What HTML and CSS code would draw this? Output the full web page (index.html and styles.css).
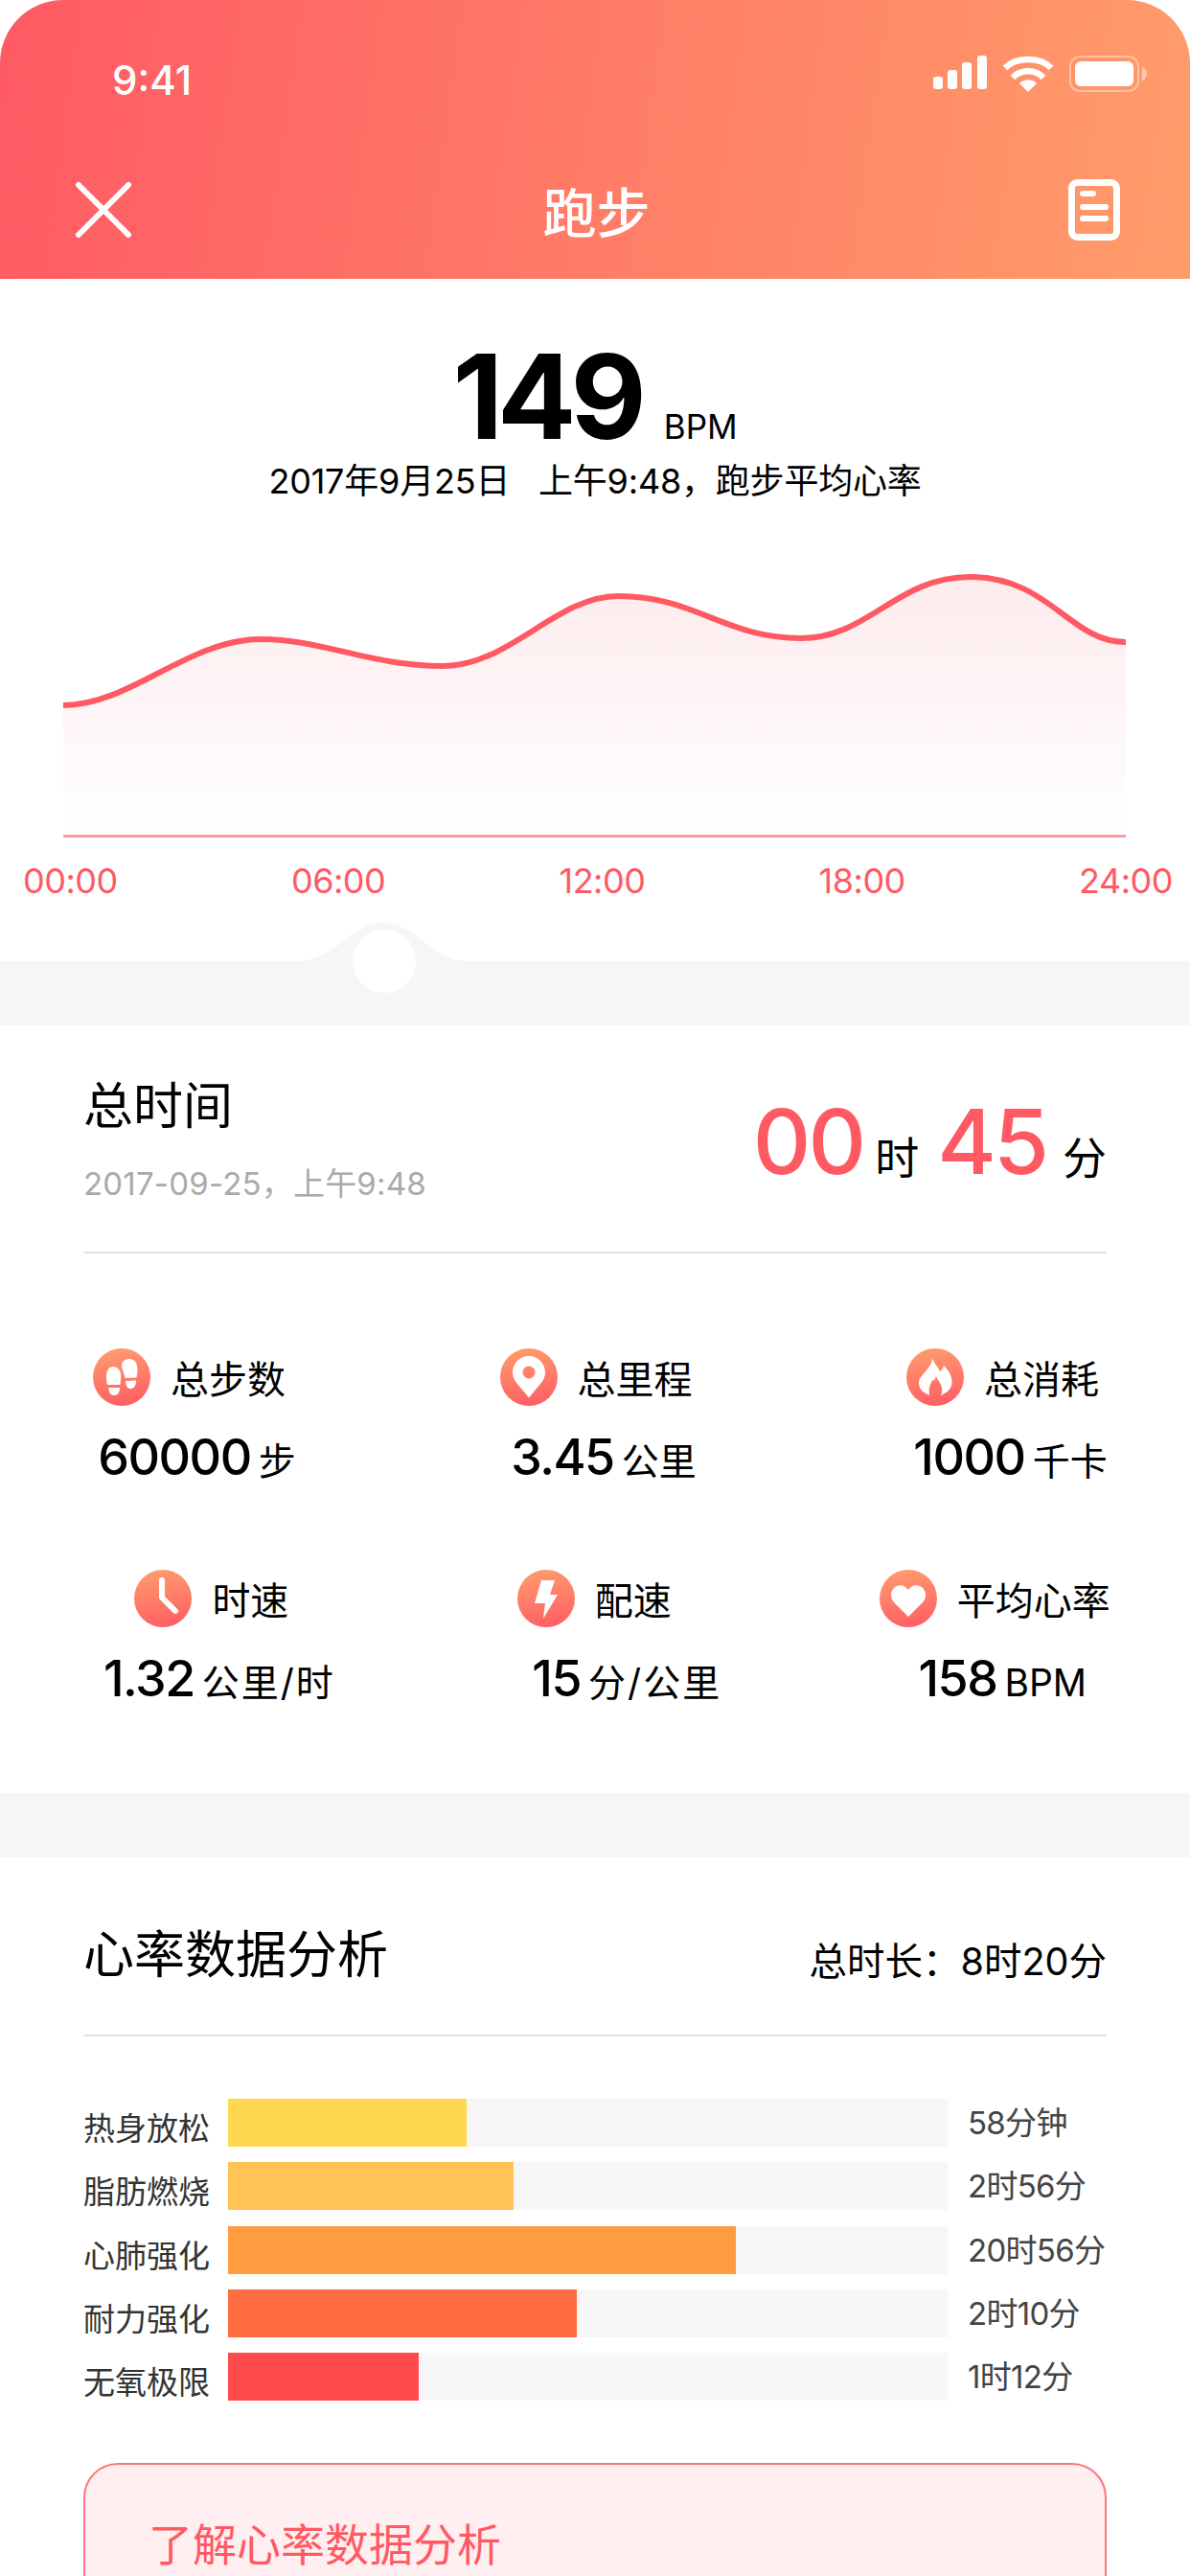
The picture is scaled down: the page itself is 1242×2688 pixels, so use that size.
FILE: index.html
```html
<!DOCTYPE html>
<html lang="zh-CN">
<head>
  <meta charset="UTF-8">
  <title>跑步</title>
  <link rel="stylesheet" href="styles.css">
</head>
<body>
<div class="page">

  <header class="topbar">
    <div class="status">
      <span class="clock">9:41</span>
      <div class="status-icons">
        <svg width="56" height="36" viewBox="0 0 56 36"><rect x="0" y="22" width="10" height="13" rx="3"/><rect x="15" y="15" width="10" height="20" rx="3"/><rect x="30" y="7" width="10" height="28" rx="3"/><rect x="46" y="0" width="10" height="35" rx="3"/></svg>
        <svg width="54" height="40" viewBox="0 0 54 40"><path d="M3 13C14 1 40 1 51 13" fill="none" stroke="#fff" stroke-width="6.5"/><path d="M11 23C19 14 35 14 43 23" fill="none" stroke="#fff" stroke-width="6.5"/><path d="M27 38L18 29C23 24 31 24 36 29Z"/></svg>
        <svg width="82" height="38" viewBox="0 0 82 38"><rect x="1" y="1" width="71" height="36" rx="10" fill="none" stroke="#fff" stroke-opacity=".4" stroke-width="2"/><rect x="6" y="6" width="61" height="26" rx="6"/><path d="M76 12c3 1 5 4 5 7s-2 6-5 7z" fill-opacity=".45"/></svg>
      </div>
    </div>
    <nav class="navbar">
      <svg width="60" height="60" viewBox="0 0 60 60"><path d="M4 4L56 56M56 4L4 56" fill="none" stroke="#fff" stroke-width="6" stroke-linecap="round"/></svg>
      <h1>跑步</h1>
      <svg width="54" height="64" viewBox="0 0 54 64"><rect x="3.500" y="3.500" width="47" height="57" rx="6" fill="none" stroke="#fff" stroke-width="7"/><rect x="12" y="12" width="17" height="6" rx="3"/><rect x="12" y="26" width="30" height="6" rx="3"/><rect x="12" y="38" width="30" height="6" rx="3"/></svg>
    </nav>
  </header>

  <section class="hero">
    <div class="bpm"><b>149</b><span>BPM</span></div>
    <p class="hero-sub">2017年9月25日&nbsp;&nbsp;&nbsp;上午9:48，跑步平均心率</p>
    <svg class="chart" width="1109" height="285" viewBox="0 0 1109 285">
      <defs>
        <linearGradient id="area" x1="0" y1="0" x2="0" y2="1">
          <stop offset="0" stop-color="#fdebed"/>
          <stop offset="1" stop-color="#fff"/>
        </linearGradient>
      </defs>
      <path fill="url(#area)" d="M0 146C70 146 130 77 207 77C270 77 320 105 397 105C465 105 515 32 579 32C660 32 690 76 770 76C840 76 870 12 946 12C1030 12 1050 80 1109 80V282H0Z"/>
      <path fill="none" stroke="#ff5a64" stroke-width="6" d="M0 146C70 146 130 77 207 77C270 77 320 105 397 105C465 105 515 32 579 32C660 32 690 76 770 76C840 76 870 12 946 12C1030 12 1050 80 1109 80"/>
      <rect x="0" y="281" width="1109" height="3" fill="#ff979d"/>
    </svg>
    <div class="axis">
      <span>00:00</span><span>06:00</span><span>12:00</span><span>18:00</span><span>24:00</span>
    </div>
  </section>

  <div class="band band-knob">
    <svg class="knob" width="180" height="74" viewBox="0 0 180 74"><path fill="#f6f6f6" d="M0 40C40 40 55 0 90 0C125 0 140 40 180 40Z"/><circle cx="91" cy="40" r="33" fill="#fff"/></svg>
  </div>

  <section class="summary">
    <div>
      <h2>总时间</h2>
      <p class="summary-date">2017-09-25，上午9:48</p>
    </div>
    <div class="duration"><b>00</b><span>时</span><b>45</b><span>分</span></div>
  </section>

  <section class="stats">
    <div class="stats-row">
      <div class="stat">
        <div class="stat-head">
          <span class="stat-icon"><svg width="60" height="60" viewBox="0 0 60 60"><path d="M15 38C14 32 13.500 29 14.500 25C15.500 21 18 19 21 19C25 19 28 22 29 26C29.500 29 29 33 28.500 38Z"/><path d="M16.500 41L28 41C28 46 26 49 22 49C18 49 16.500 46 16.500 41Z"/><path d="M45.500 30.500C46.500 25 47 21 46 18C45 13 42 11 38 11C33 11 30 14 30 18C30 22 33 26 33.500 31Z"/><path d="M34 34L45 33.500C45 39 43 42 39 42C35.500 42 34 38 34 34Z"/></svg></span>
          <span>总步数</span>
        </div>
        <div class="stat-value"><b>60000</b><span>步</span></div>
      </div>
      <div class="stat">
        <div class="stat-head">
          <span class="stat-icon"><svg width="60" height="60" viewBox="0 0 60 60"><path fill-rule="evenodd" d="M30 8C39.400 8 47 15.600 47 25C47 29.700 45.100 33.900 42 37L30 51.500L18 37C14.900 33.900 13 29.700 13 25C13 15.600 20.600 8 30 8ZM30 18.500a6.500 6.500 0 1 0 0 13a6.500 6.500 0 1 0 0-13Z"/></svg></span>
          <span>总里程</span>
        </div>
        <div class="stat-value"><b>3.45</b><span>公里</span></div>
      </div>
      <div class="stat">
        <div class="stat-head">
          <span class="stat-icon"><svg width="60" height="60" viewBox="0 0 60 60"><path d="M27 10C29 16 33 19 35 24C37 23 38 21 39 18C45 24 48 30 47.500 36C47 42 43 46 36 49C38 45 37.500 40 35 36C34 34 32 32 31 29C30 32 29 34 27.500 33C25 37 23 40 24 49C17 46 13 42 13 36C13 31 17 28 20 24C23 20 27 16 27 10Z"/></svg></span>
          <span>总消耗</span>
        </div>
        <div class="stat-value"><b>1000</b><span>千卡</span></div>
      </div>
    </div>
    <div class="stats-row stats-row-second">
      <div class="stat">
        <div class="stat-head">
          <span class="stat-icon"><svg width="60" height="60" viewBox="0 0 60 60"><path d="M29 11V29L43 43" fill="none" stroke="#fff" stroke-width="6" stroke-linecap="round" stroke-linejoin="round"/></svg></span>
          <span>时速</span>
        </div>
        <div class="stat-value"><b>1.32</b><span class="unit-wide">公里/时</span></div>
      </div>
      <div class="stat stat-pace">
        <div class="stat-head">
          <span class="stat-icon"><svg width="60" height="60" viewBox="0 0 60 60"><path d="M25 11H39L34 26H42L27 51L29 35H18Z"/></svg></span>
          <span>配速</span>
        </div>
        <div class="stat-value"><b>15</b><span class="unit-wide">分/公里</span></div>
      </div>
      <div class="stat">
        <div class="stat-head">
          <span class="stat-icon"><svg width="60" height="60" viewBox="0 0 60 60"><path d="M30 49L15 34C11 30 11 23 15 19C19 15 26 15 30 21C34 15 41 15 45 19C49 23 49 30 45 34Z"/></svg></span>
          <span>平均心率</span>
        </div>
        <div class="stat-value"><b>158</b><span class="latin">BPM</span></div>
      </div>
    </div>
  </section>

  <div class="band"></div>

  <section class="analysis">
    <div class="analysis-head">
      <h2>心率数据分析</h2>
      <span class="analysis-total">总时长：8时20分</span>
    </div>
    <div class="bars">
      <div class="bar-row">
        <span class="bar-label">热身放松</span>
        <div class="bar-track"><div class="bar-fill fill-warm" style="width:33.1%"></div></div>
        <span class="bar-value">58分钟</span>
      </div>
      <div class="bar-row">
        <span class="bar-label">脂肪燃烧</span>
        <div class="bar-track"><div class="bar-fill fill-burn" style="width:39.6%"></div></div>
        <span class="bar-value">2时56分</span>
      </div>
      <div class="bar-row">
        <span class="bar-label">心肺强化</span>
        <div class="bar-track"><div class="bar-fill fill-cardio" style="width:70.5%"></div></div>
        <span class="bar-value">20时56分</span>
      </div>
      <div class="bar-row">
        <span class="bar-label">耐力强化</span>
        <div class="bar-track"><div class="bar-fill fill-endure" style="width:48.4%"></div></div>
        <span class="bar-value">2时10分</span>
      </div>
      <div class="bar-row">
        <span class="bar-label">无氧极限</span>
        <div class="bar-track"><div class="bar-fill fill-anaerobic" style="width:26.5%"></div></div>
        <span class="bar-value">1时12分</span>
      </div>
    </div>
    <div class="learn">了解心率数据分析</div>
  </section>

</div>
</body>
</html>
```

FILE: styles.css
```css
* {
  box-sizing: border-box;
}

body {
  margin: 0;
  background: #fff;
  font-family: Inter, "Noto Sans CJK SC", sans-serif;
  color: #000;
}

h1, h2, p {
  margin: 0;
  font-weight: 400;
}

svg {
  display: block;
  fill: #fff;
}

.page {
  width: 1242px;
  height: 2688px;
  overflow: hidden;
}

/* top bar */
.topbar {
  height: 291px;
  border-radius: 66px 66px 0 0;
  background: linear-gradient(98deg, #ff5a64 0%, #ff9d6a 100%);
  color: #fff;
}

.status {
  height: 150px;
  padding: 58px 44px 0 117px;
  display: flex;
  justify-content: space-between;
  align-items: flex-start;
}

.clock {
  font-size: 42px;
  line-height: 52px;
  font-weight: 500;
}

.status-icons {
  display: flex;
  gap: 16px;
  align-items: flex-start;
}

.navbar {
  padding: 28px 73px 0 78px;
  display: flex;
  justify-content: space-between;
  align-items: center;
}

.navbar h1 {
  margin-right: 8px;
  font-size: 56px;
  font-weight: 500;
}

/* heart rate chart */
.hero {
  height: 712px;
  padding-top: 63px;
}

.bpm {
  display: flex;
  justify-content: center;
  align-items: baseline;
  gap: 24px;
  height: 120px;
  line-height: 120px;
}

.bpm b {
  font-size: 122px;
  font-weight: 700;
  letter-spacing: -6px;
}

.bpm span {
  font-size: 35px;
}

.hero-sub {
  margin-top: 5px;
  text-align: center;
  font-size: 36px;
  line-height: 46px;
  letter-spacing: -0.2px;
}

.chart {
  margin: 65px 0 0 66px;
}

.axis {
  margin-top: 22px;
  padding: 0 18px 0 24px;
  display: flex;
  justify-content: space-between;
  font-size: 36px;
  line-height: 44px;
  letter-spacing: -0.5px;
  color: #ff5a64;
}

.band {
  height: 67px;
  background: #f6f6f6;
}

.band-knob {
  position: relative;
}

.knob {
  position: absolute;
  left: 310px;
  top: -40px;
}

/* total time */
.summary {
  margin: 0 87px;
  padding: 55px 0 49px;
  border-bottom: 2px solid #e2e2e2;
  display: flex;
  justify-content: space-between;
  align-items: center;
}

.summary h2 {
  font-size: 52px;
  line-height: 60px;
}

.summary-date {
  margin-top: 28px;
  font-size: 33px;
  line-height: 44px;
  letter-spacing: 0.2px;
  color: #aaa;
}

.duration {
  display: flex;
  align-items: baseline;
  font-size: 46px;
}

.duration b {
  font-size: 94px;
  font-weight: 500;
  letter-spacing: -3px;
  color: #ff5a64;
}

.duration span {
  margin-left: 17px;
}

.duration span:nth-child(2) {
  margin: 0 19px 0 12px;
}

/* stats grid */
.stats {
  height: 563px;
  padding-top: 99px;
}

.stats-row {
  padding: 0 79px 0 97px;
  display: flex;
  justify-content: space-between;
  margin-bottom: 87px;
}

.stats-row-second {
  padding: 0 0 0 108px;
  justify-content: flex-start;
}

.stat {
  display: flex;
  flex-direction: column;
  align-items: center;
}

.stat-pace {
  margin: 0 149px 0 190px;
}

.stat-head {
  display: flex;
  align-items: center;
  gap: 21px;
  height: 60px;
  padding-right: 16px;
  font-size: 40px;
}

.stat-pace .stat-head {
  padding-right: 68px;
}

.stat-icon {
  width: 60px;
  height: 60px;
  border-radius: 50%;
  background: linear-gradient(170deg, #ff9f6d 0%, #ff5a64 100%);
}

.stat-value {
  margin-top: 24px;
  height: 60px;
  display: flex;
  align-items: baseline;
  gap: 8px;
  line-height: 60px;
  font-size: 39px;
}

.stat-value b {
  font-size: 52px;
  font-weight: 500;
  letter-spacing: -1.5px;
}

.stat-value .unit-wide {
  letter-spacing: 2px;
}

.stat-value .latin {
  font-size: 39px;
}

/* heart rate analysis */
.analysis {
  padding: 0 87px;
}

.analysis-head {
  padding: 67px 0 48px;
  border-bottom: 2px solid #e2e2e2;
  display: flex;
  justify-content: space-between;
  align-items: center;
}

.analysis-head h2 {
  font-size: 53px;
  line-height: 70px;
}

.analysis-total {
  padding-top: 6px;
  font-size: 39.5px;
}

.bars {
  margin-top: 64px;
}

.bar-row {
  height: 50px;
  margin-bottom: 16.3px;
  display: grid;
  grid-template-columns: 151px 752px 1fr;
  align-items: center;
}

.bar-label {
  padding-top: 12px;
  font-size: 33px;
  line-height: 38px;
  color: #333;
}

.bar-track {
  height: 50px;
  background: #f7f7f7;
}

.bar-fill {
  height: 100%;
}

.fill-warm { background: #ffd84f; }
.fill-burn { background: #ffc453; }
.fill-cardio { background: #ff9c3f; }
.fill-endure { background: #ff6d40; }
.fill-anaerobic { background: #ff4b4e; }

.bar-value {
  padding: 0 0 4px 20px;
  font-size: 33px;
  letter-spacing: -0.7px;
  color: #444;
  white-space: nowrap;
}

.learn {
  margin-top: 66px;
  height: 300px;
  padding: 52px 66px;
  border: 2px solid #ff747c;
  border-radius: 36px;
  background: #ffeff0;
  font-size: 46px;
  line-height: 62px;
  color: #ff5a64;
}
```
